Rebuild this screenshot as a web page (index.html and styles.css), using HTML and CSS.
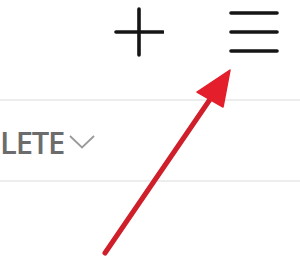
FILE: index.html
```html
<!DOCTYPE html>
<html>
<head>
<meta charset="utf-8">
<link rel="stylesheet" href="styles.css">
</head>
<body>
<div class="page">
  <header class="topbar">
    <svg class="icon plus" viewBox="0 0 50 50" width="50" height="50">
      <line x1="2" y1="25" x2="49" y2="25" />
      <line x1="25" y1="2" x2="25" y2="48" />
    </svg>
    <svg class="icon menu" viewBox="0 0 50 50" width="50" height="50">
      <line x1="2" y1="6" x2="48" y2="6" />
      <line x1="2" y1="25" x2="48" y2="25" />
      <line x1="2" y1="44" x2="48" y2="44" />
    </svg>
  </header>
  <div class="filter-row">
    <span class="filter-label">LETE</span>
    <svg class="chevron" viewBox="0 0 26 14" width="26" height="14">
      <polyline points="1,1 13,12.5 25,1" />
    </svg>
  </div>
  <svg class="arrow" viewBox="0 0 300 263" width="300" height="263">
    <line class="shaft" x1="105" y1="253" x2="213" y2="95" />
    <polygon class="head" points="230,70 197,92 223,107" />
  </svg>
</div>
</body>
</html>
```

FILE: styles.css
```css
html, body {
  margin: 0;
  padding: 0;
  background: #ffffff;
}
.page {
  position: relative;
  width: 300px;
  height: 263px;
  overflow: hidden;
  font-family: "Open Sans", "Liberation Sans", sans-serif;
}
.topbar {
  display: flex;
  justify-content: flex-end;
  align-items: flex-start;
  gap: 65px;
  height: 92px;
  padding: 7px 21px 0 0;
  border-bottom: 2px solid #ededed;
}
.icon {
  display: block;
  fill: none;
  stroke: #151515;
  stroke-width: 3.6;
  stroke-linecap: round;
}
.filter-row {
  display: flex;
  align-items: center;
  gap: 5px;
  height: 79px;
  border-bottom: 2px solid #ededed;
  padding-left: 0;
}
.filter-label {
  margin-left: 0;
  font-size: 31px;
  font-weight: 600;
  color: #6c6c6c;
  letter-spacing: -1.2px;
  line-height: 1;
  margin-top: 3px;
}
.chevron {
  display: block;
  fill: none;
  stroke: #9a9a9a;
  stroke-width: 1.8;
  margin-top: 2px;
}
.arrow {
  position: absolute;
  left: 0;
  top: 0;
}
.shaft {
  stroke: #cf1f2a;
  stroke-width: 5;
  stroke-linecap: round;
}
.head {
  fill: #e41e2b;
  stroke: #e41e2b;
  stroke-width: 1.5;
  stroke-linejoin: round;
}
```
